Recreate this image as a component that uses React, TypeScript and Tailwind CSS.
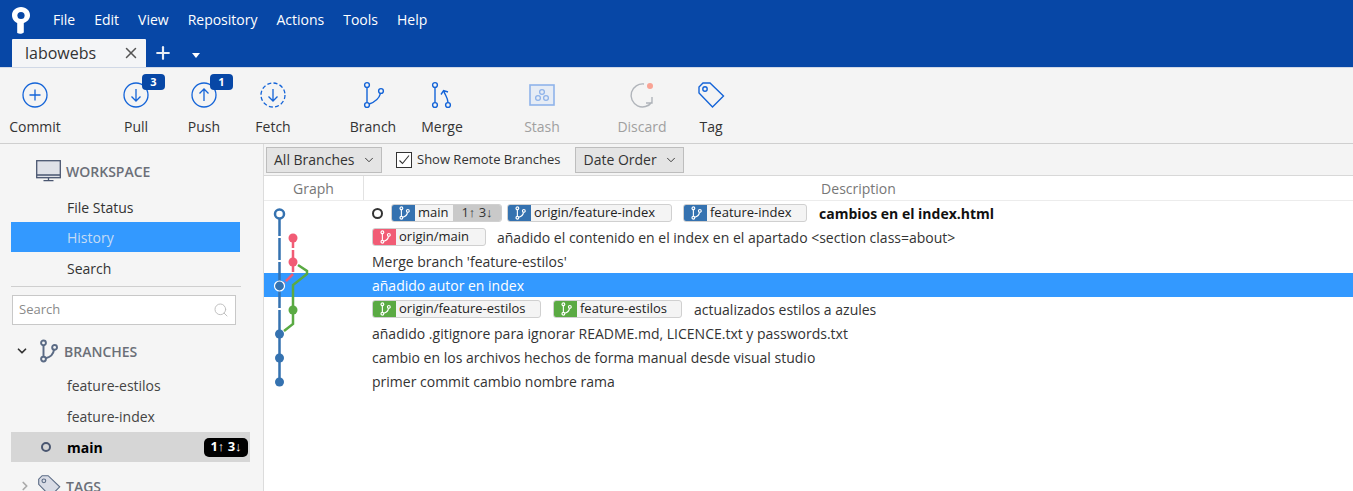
import { ChevronDown, Plus, Search, X } from "lucide-react"

const ui = "font-['Open_Sans',sans-serif]"

// Commit graph drawn over the rows
const CommitGraph = () => (
  <svg className="absolute left-0 top-0" width="100" height="200" viewBox="264 200 100 200" fill="none">
    <path d="M279.5 213V381" stroke="#3572b0" strokeWidth="2.5" strokeDasharray="22 2" />
    <path d="M293 237V273L284 282" stroke="#f15c75" strokeWidth="2.5" strokeDasharray="10 2" />
    <path d="M298 264L307 270V273L293 284V323L284 330" stroke="#5aaa43" strokeWidth="2.5" />
    <circle cx="279.5" cy="213" r="4.5" fill="#fff" stroke="#3572b0" strokeWidth="2.5" />
    <circle cx="293" cy="237" r="4.5" fill="#f15c75" />
    <circle cx="293" cy="261" r="4.5" fill="#f15c75" />
    <circle cx="279.5" cy="285" r="5" fill="#3572b0" stroke="#fff" strokeWidth="1.2" />
    <circle cx="293" cy="309" r="4.5" fill="#5aaa43" />
    <circle cx="279.5" cy="333" r="4.5" fill="#3572b0" />
    <circle cx="279.5" cy="357" r="4.5" fill="#3572b0" />
    <circle cx="279.5" cy="381" r="4.5" fill="#3572b0" />
  </svg>
)

const BranchGlyph = ({ className = "", size = 16 }: { className?: string; size?: number }) => (
  <svg width={size} height={size} viewBox="0 0 16 16" fill="none" stroke="currentColor" strokeWidth="1.3" className={className}>
    <circle cx="5" cy="2.6" r="1.6" />
    <circle cx="5" cy="13.4" r="1.6" />
    <circle cx="12.4" cy="5.6" r="1.6" />
    <path d="M5 4.2V11.8M6.5 12.8C9.5 12 11.6 10 12 7.2" />
  </svg>
)

const Ref = ({ name, color, width, extra }: { name: string; color: string; width: string; extra?: boolean }) => (
  <span className={`flex h-[18px] items-center overflow-hidden rounded-[3px] border border-[#d0d0d0] bg-[#f4f4f4] ${width}`}>
    <span className={`flex h-[18px] w-[23px] shrink-0 items-center justify-center text-white ${color}`}>
      <BranchGlyph size={14} />
    </span>
    <span className="ml-[3px] text-[13px] text-[#222]">{name}</span>
    {extra && (
      <span className="ml-auto flex h-[18px] w-[48px] items-center justify-center bg-[#c9c9c9] text-[13px] text-[#333]">1↑ 3↓</span>
    )}
  </span>
)

const ToolButton = ({
  label,
  className,
  muted,
  children,
}: {
  label: string
  className?: string
  muted?: boolean
  children: React.ReactNode
}) => (
  <div className={`relative flex w-[68px] shrink-0 flex-col items-center ${className ?? ""}`}>
    <div className="flex h-[40px] items-center justify-center">{children}</div>
    <span className={`mt-[2px] text-[14px] leading-[20px] ${muted ? "text-[#a0a0a0]" : "text-[#333]"}`}>{label}</span>
  </div>
)

const CircleIcon = ({ d, dashed }: { d: string; dashed?: boolean }) => (
  <svg width="26" height="26" viewBox="0 0 26 26" fill="none" stroke="#1464d8" strokeWidth="1.3">
    <circle cx="13" cy="13" r="12" strokeDasharray={dashed ? "4 2.3" : undefined} />
    <path d={d} />
  </svg>
)

const Badge = ({ n }: { n: number }) => (
  <span className="absolute left-[40px] top-[-1px] flex h-[16px] w-[23px] items-center justify-center rounded-[4px] bg-[#0747a6] text-[11px] font-bold text-white">
    {n}
  </span>
)

const rows = [
  { key: 1 },
  { key: 2 },
]

export default function App() {
  return (
    <div className={`flex h-[491px] w-[1353px] flex-col overflow-hidden bg-white ${ui}`}>
      {/* Title bar */}
      <header className="h-[67px] shrink-0 bg-[#0747a6]">
        <div className="flex h-[38px] items-center">
          <svg width="24" height="28" viewBox="0 0 24 28" className="ml-[10px] mt-[2px]">
            <path
              d="M11 1C5.8 1 2 4.6 2 9.3c0 3.6 2.3 6.4 5.2 7.7V27c2.6 1.2 5 .6 6.6-.6v-9.3c3.4-1.2 6.2-4 6.2-7.8C20 4.6 16.2 1 11 1z"
              fill="#fff"
            />
            <circle cx="11" cy="9.5" r="3.6" fill="#0747a6" />
          </svg>
          <nav className="ml-[19px] flex gap-[19px] text-[14px] text-white">
            <span>File</span>
            <span>Edit</span>
            <span>View</span>
            <span>Repository</span>
            <span>Actions</span>
            <span>Tools</span>
            <span>Help</span>
          </nav>
        </div>
        <div className="flex h-[29px] items-end">
          <div className="ml-[12px] flex h-[28px] w-[134px] items-center rounded-t-[1px] bg-[#f4f5f7] pl-[13px] pr-[6px]">
            <span className="text-[16px] text-[#333]">labowebs</span>
            <X className="ml-auto h-[18px] w-[18px] text-[#555]" strokeWidth={2} />
          </div>
          <Plus className="mb-[4px] ml-[7px] h-[20px] w-[20px] text-[#e8edf5]" strokeWidth={2.6} />
          <span className="mb-[9px] ml-[19px] h-0 w-0 border-x-[4.5px] border-t-[5px] border-x-transparent border-t-white" />
        </div>
      </header>

      {/* Toolbar */}
      <div className="flex h-[77px] shrink-0 items-start border-y border-[#d0d8e6] border-b-[#cfcfcf] bg-[#f4f4f4] pt-[7px]">
        <ToolButton label="Commit" className="ml-[1px]">
          <CircleIcon d="M13 7.5V18.5M7.5 13H18.5" />
        </ToolButton>
        <ToolButton label="Pull" className="ml-[33px]">
          <CircleIcon d="M13 7V19M8.5 14.5L13 19L17.5 14.5" />
          <Badge n={3} />
        </ToolButton>
        <ToolButton label="Push">
          <CircleIcon d="M13 19V7M8.5 11.5L13 7L17.5 11.5" />
          <Badge n={1} />
        </ToolButton>
        <ToolButton label="Fetch" className="ml-[1px]">
          <CircleIcon d="M13 7V19M8.5 14.5L13 19L17.5 14.5" dashed />
        </ToolButton>
        <ToolButton label="Branch" className="ml-[32px]">
          <svg width="24" height="28" viewBox="0 0 24 28" fill="none" stroke="#1464d8" strokeWidth="1.4">
            <circle cx="6" cy="4" r="2.4" />
            <circle cx="6" cy="24" r="2.4" />
            <circle cx="20" cy="10" r="2.4" />
            <path d="M6 6.4V21.6M8.2 23C14 21 18 18 19.5 12.4" />
          </svg>
        </ToolButton>
        <ToolButton label="Merge" className="ml-[1px]">
          <svg width="24" height="28" viewBox="0 0 24 28" fill="none" stroke="#1464d8" strokeWidth="1.4">
            <circle cx="5" cy="4" r="2.4" />
            <circle cx="5" cy="24" r="2.4" />
            <circle cx="18" cy="24" r="2.4" />
            <path d="M5 6.4V21.6M18 21.6C18 17 15 14 14 10.5M11 13.5L13.6 9.6L18 11" />
          </svg>
        </ToolButton>
        <ToolButton label="Stash" className="ml-[32px]" muted>
          <svg width="26" height="22" viewBox="0 0 26 22" fill="none" stroke="#8fb3ea" strokeWidth="1.3">
            <rect x="1" y="1" width="24" height="20" fill="#e6ecf5" strokeWidth="1.6" />
            <circle cx="13" cy="8" r="2.4" />
            <circle cx="9" cy="14" r="2.4" />
            <circle cx="17" cy="14" r="2.4" />
          </svg>
        </ToolButton>
        <ToolButton label="Discard" className="ml-[32px]" muted>
          <svg width="28" height="28" viewBox="0 0 28 28" fill="none" stroke="#b0b4ba" strokeWidth="1.4">
            <path d="M16 3A11.5 11.5 0 1 0 24 21M24 16V22H18" />
            <circle cx="22" cy="5" r="3" fill="#f9a394" stroke="none" />
          </svg>
        </ToolButton>
        <ToolButton label="Tag" className="ml-[1px]">
          <svg width="28" height="28" viewBox="0 0 28 28" fill="none" stroke="#1464d8" strokeWidth="1.4">
            <path d="M2 6V12L15.5 26L26.5 15L13 2H6Z" />
            <circle cx="8" cy="8" r="2.2" />
          </svg>
        </ToolButton>
      </div>

      <div className="flex min-h-0 flex-1">
        {/* Sidebar */}
        <aside className="w-[264px] shrink-0 overflow-hidden border-r border-[#dcdcdc] bg-[#f5f5f5]">
          <div className="mt-[14px] flex h-[26px] items-center pl-[36px]">
            <svg width="25" height="22" viewBox="0 0 25 22" fill="none">
              <rect x=".7" y=".7" width="23.6" height="17" fill="#dfe1e8" stroke="#4a5670" strokeWidth="1.3" />
              <path d="M1 15H24M12.5 18V20M7.5 20.7H17.5" stroke="#4a5670" strokeWidth="1.3" />
            </svg>
            <span className="ml-[5px] text-[14px] font-semibold text-[#6b6f78]">WORKSPACE</span>
          </div>
          <div className="mt-[9px] flex h-[29px] items-center pl-[67px] text-[14px] text-[#333]">File Status</div>
          <div className="mx-[11px] flex h-[30px] w-[229px] items-center bg-[#3399ff] pl-[56px] text-[14px] text-[#c5dcf5]">History</div>
          <div className="flex h-[33px] items-center pl-[67px] text-[14px] text-[#333]">Search</div>
          <div className="mx-[11px] mt-[1px] h-px w-[230px] bg-[#cfcfcf]" />
          <div className="ml-[12px] mt-[8px] flex h-[30px] w-[224px] items-center border border-[#c8c8c8] bg-white px-[6px] text-[13px] text-[#8a8a8a]">
            Search
            <Search className="ml-auto h-[16px] w-[16px] text-[#bcbcbc]" strokeWidth={1.4} />
          </div>
          <div className="mt-[10px] flex h-[32px] items-center pl-[15px]">
            <ChevronDown className="h-[14px] w-[14px] text-[#333]" strokeWidth={3} />
            <BranchGlyph size={24} className="ml-[7px] text-[#5b6b85]" />
            <span className="ml-[4px] text-[14px] font-semibold text-[#6b6f78]">BRANCHES</span>
          </div>
          <div className="mt-[3px] flex h-[31px] items-center pl-[67px] text-[14px] text-[#444]">feature-estilos</div>
          <div className="flex h-[31px] items-center pl-[67px] text-[14px] text-[#444]">feature-index</div>
          <div className="mx-[11px] flex h-[30px] w-[239px] items-center bg-[#d6d6d6] pl-[30px] pr-[2px]">
            <span className="h-[10px] w-[10px] rounded-full border-[2.5px] border-[#4a5670]" />
            <span className="ml-[16px] text-[14px] font-bold text-black">main</span>
            <span className="ml-auto flex h-[19px] w-[44px] items-center justify-center rounded-[5px] bg-black text-[13px] font-bold text-white">1↑ 3↓</span>
          </div>
          <div className="mt-[8px] flex h-[32px] items-center pl-[18px]">
            <ChevronDown className="h-[14px] w-[14px] -rotate-90 text-[#aaa]" strokeWidth={3} />
            <svg width="26" height="24" viewBox="0 0 28 28" fill="#d9dce6" stroke="#5b6b85" strokeWidth="1.3" className="ml-[4px]">
              <path d="M2 6V12L15.5 26L26.5 15L13 2H6Z" />
              <circle cx="8" cy="8" r="2.2" />
            </svg>
            <span className="ml-[4px] text-[14px] font-semibold text-[#6b6f78]">TAGS</span>
          </div>
        </aside>

        {/* History panel */}
        <main className="flex min-w-0 flex-1 flex-col">
          <div className="flex h-[32px] shrink-0 items-center border-b border-[#d8d8d8] bg-[#f4f4f4] pl-[2px]">
            <div className="flex h-[26px] w-[116px] items-center justify-between border border-[#bdbdbd] bg-[#e4e4e4] pl-[7px] pr-[5px] text-[14px] text-[#333]">
              All Branches
              <ChevronDown className="h-[14px] w-[14px]" strokeWidth={1.6} />
            </div>
            <span className="ml-[14px] flex h-[16px] w-[16px] items-center justify-center border border-[#333] bg-white">
              <svg width="14" height="14" viewBox="0 0 14 14" fill="none" stroke="#333" strokeWidth="1.1">
                <path d="M2.5 7.5L5.5 10.5L12 2.5" />
              </svg>
            </span>
            <span className="ml-[5px] text-[13px] text-[#333]">Show Remote Branches</span>
            <div className="ml-[15px] flex h-[26px] w-[109px] items-center justify-between border border-[#bdbdbd] bg-[#e4e4e4] pl-[7px] pr-[5px] text-[14px] text-[#333]">
              Date Order
              <ChevronDown className="h-[14px] w-[14px]" strokeWidth={1.6} />
            </div>
          </div>
          <div className="flex h-[25px] shrink-0 border-b border-[#ececec] text-[14px] text-[#777]">
            <div className="flex w-[100px] items-center justify-center border-r border-[#e2e2e2]">Graph</div>
            <div className="flex flex-1 items-center justify-center">Description</div>
          </div>

          <div className="relative text-[14px] text-[#333]">
            <div className="flex h-[24px] items-center gap-[5px] pl-[108px]">
              <span className="h-[11px] w-[11px] rounded-full border-[2.5px] border-[#333]" />
              <span className="ml-[3px]">
                <Ref name="main" color="bg-[#3572b0]" width="w-[111px]" extra />
              </span>
              <Ref name="origin/feature-index" color="bg-[#3572b0]" width="w-[165px]" />
              <span className="ml-[6px]">
                <Ref name="feature-index" color="bg-[#3572b0]" width="w-[124px]" />
              </span>
              <span className="ml-[7px] font-bold text-[#111]">cambios en el index.html</span>
            </div>
            <div className="flex h-[24px] items-center pl-[108px]">
              <Ref name="origin/main" color="bg-[#f15c75]" width="w-[114px]" />
              <span className="ml-[11px]">añadido el contenido en el index en el apartado &lt;section class=about&gt;</span>
            </div>
            <div className="flex h-[24px] items-center pl-[108px]">Merge branch 'feature-estilos'</div>
            <div className="flex h-[24px] items-center bg-[#3399ff] pl-[108px] text-white">añadido autor en index</div>
            <div className="flex h-[24px] items-center pl-[108px]">
              <Ref name="origin/feature-estilos" color="bg-[#5aaa43]" width="w-[169px]" />
              <span className="ml-[12px]">
                <Ref name="feature-estilos" color="bg-[#5aaa43]" width="w-[129px]" />
              </span>
              <span className="ml-[12px]">actualizados estilos a azules</span>
            </div>
            <div className="flex h-[24px] items-center pl-[108px]">añadido .gitignore para ignorar README.md, LICENCE.txt y passwords.txt</div>
            <div className="flex h-[24px] items-center pl-[108px]">cambio en los archivos hechos de forma manual desde visual studio</div>
            <div className="flex h-[24px] items-center pl-[108px]">primer commit cambio nombre rama</div>
            <CommitGraph />
          </div>
        </main>
      </div>
    </div>
  )
}
